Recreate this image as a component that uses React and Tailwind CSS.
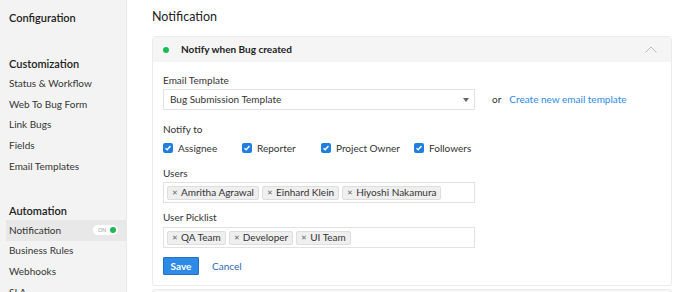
import React from "react";

const font = { fontFamily: "Lato, 'Open Sans', sans-serif" };

function SideItem({ label, active, toggle }) {
	return (
		<div
			className={`flex items-center justify-between h-[20.75px] pl-[3px] pr-[8px] text-[10px] text-[#333] whitespace-nowrap ${
				active ? "bg-[#e8e8e8]" : ""
			}`}
		>
			<span>{label}</span>
			{toggle && (
				<span className="flex items-center gap-[4px] bg-white rounded-full h-[10px] pl-[5px] pr-[2px]">
					<span className="text-[5px] text-[#999] leading-none">ON</span>
					<span className="w-[6px] h-[6px] rounded-full bg-[#1db954]" />
				</span>
			)}
		</div>
	);
}

function Sidebar() {
	return (
		<aside className="w-[127px] shrink-0 bg-[#f3f3f3] border-r border-[#e8e8e8] pl-[6px] pt-[9px] h-[292px] overflow-hidden">
			<div className="pl-[3px] text-[11px] font-semibold text-[#222] h-[18px] leading-[18px]">Configuration</div>
			<div className="pl-[3px] mt-[28px] text-[11px] font-semibold text-[#222] h-[18px] leading-[18px]">Customization</div>
			<div>
				<SideItem label="Status & Workflow" />
				<SideItem label="Web To Bug Form" />
				<SideItem label="Link Bugs" />
				<SideItem label="Fields" />
				<SideItem label="Email Templates" />
			</div>
			<div className="pl-[3px] mt-[25px] text-[11px] font-semibold text-[#222] h-[18px] leading-[18px]">Automation</div>
			<div>
				<SideItem label="Notification" active toggle />
				<SideItem label="Business Rules" />
				<SideItem label="Webhooks" />
				<SideItem label="SLA" />
			</div>
		</aside>
	);
}

function Check({ label, className }) {
	return (
		<label className={`flex items-center gap-[5px] text-[10px] text-[#333] whitespace-nowrap ${className}`}>
			<span className="w-[10px] h-[10px] rounded-[2px] bg-[#1f7fe0] flex items-center justify-center">
				<svg width="8" height="8" viewBox="0 0 8 8">
					<path d="M1.5 4.2 L3.2 5.8 L6.5 2" stroke="white" strokeWidth="1.4" fill="none" />
				</svg>
			</span>
			{label}
		</label>
	);
}

function Tag({ label }) {
	return (
		<span className="flex items-center gap-[3px] h-[14px] px-[4px] bg-[#efefef] border border-[#dedede] rounded-[2px] text-[10px] text-[#333] whitespace-nowrap">
			<span className="text-[7px] text-[#666]">✕</span>
			{label}
		</span>
	);
}

function TagBox({ tags }) {
	return (
		<div className="w-[312px] h-[21px] border border-[#e2e2e2] bg-white flex items-center gap-[3px] px-[3px]">
			{tags.map((t) => (
				<Tag key={t} label={t} />
			))}
		</div>
	);
}

export default function App() {
	return (
		<div className="flex w-[680px] h-[292px] bg-white overflow-hidden" style={font}>
			<Sidebar />
			<main className="flex-1 pl-[25px] pr-[8px] pt-[7px]">
				<h1 className="text-[12.5px] text-[#222] h-[20px] leading-[20px]">Notification</h1>
				<div className="mt-[9px] w-[520px] border border-[#ececec] rounded-[3px]">
					<div className="flex items-center h-[25px] bg-[#f5f5f5] pl-[10px] pr-[14px]">
						<span className="w-[6px] h-[6px] rounded-full bg-[#1db954]" />
						<span className="ml-[12px] text-[10px] font-bold text-[#222]">Notify when Bug created</span>
						<svg className="ml-auto" width="12" height="7" viewBox="0 0 12 7">
							<path d="M0.5 6.5 L6 1 L11.5 6.5" stroke="#bbb" strokeWidth="1" fill="none" />
						</svg>
					</div>
					<div className="pl-[10px] pt-[10px] pb-[10px]">
						<div className="text-[10px] text-[#333] h-[16px] leading-[16px]">Email Template</div>
						<div className="flex items-center mt-[1px]">
							<div className="w-[312px] h-[21px] border border-[#e2e2e2] flex items-center justify-between pl-[6px] pr-[5px] text-[10px] text-[#333]">
								<span>Bug Submission Template</span>
								<svg width="6" height="4" viewBox="0 0 6 4">
									<path d="M0 0 L6 0 L3 4 Z" fill="#666" />
								</svg>
							</div>
							<span className="ml-[17px] text-[10px] text-[#333]">or</span>
							<span className="ml-[8px] text-[10px] text-[#2d8ae6]">Create new email template</span>
						</div>
						<div className="mt-[11px] text-[10px] text-[#333] h-[16px] leading-[16px]">Notify to</div>
						<div className="flex items-center mt-[3px] h-[16px]">
							<Check label="Assignee" className="w-[79px]" />
							<Check label="Reporter" className="w-[79px]" />
							<Check label="Project Owner" className="w-[93px]" />
							<Check label="Followers" />
						</div>
						<div className="mt-[9px] text-[10px] text-[#333] h-[16px] leading-[16px]">Users</div>
						<div className="mt-[1px]">
							<TagBox tags={["Amritha Agrawal", "Einhard Klein", "Hiyoshi Nakamura"]} />
						</div>
						<div className="mt-[6px] text-[10px] text-[#333] h-[16px] leading-[16px]">User Picklist</div>
						<div className="mt-[2px]">
							<TagBox tags={["QA Team", "Developer", "UI Team"]} />
						</div>
						<div className="flex items-center mt-[9px]">
							<button className="h-[18px] w-[36px] bg-[#2d8ae6] border border-[#1f72c4] text-white text-[10px] font-bold rounded-[1px]">
								Save
							</button>
							<span className="ml-[13px] text-[10px] text-[#2a6cb0]">Cancel</span>
						</div>
					</div>
				</div>
				<div className="mt-[3px] w-[520px] h-[10px] border border-[#ececec] bg-[#f5f5f5] rounded-[3px]" />
			</main>
		</div>
	);
}
